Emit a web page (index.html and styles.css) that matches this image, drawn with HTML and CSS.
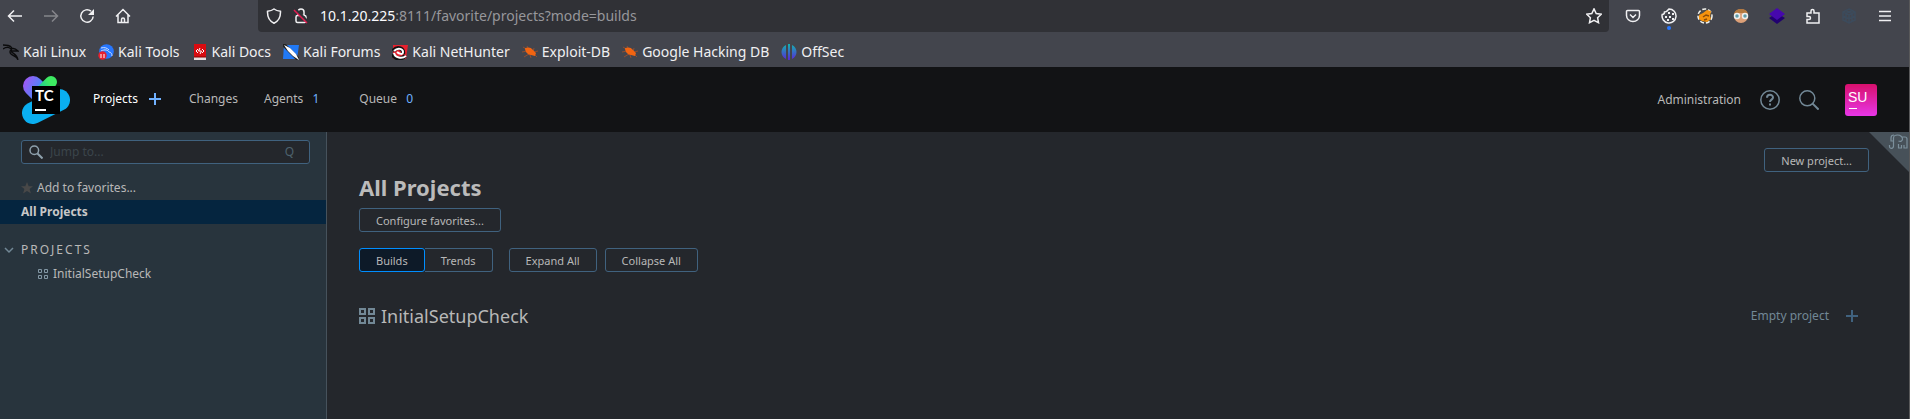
FILE: index.html
```html
<!DOCTYPE html>
<html lang="en">
<head>
<meta charset="utf-8">
<title>All Projects — TeamCity</title>
<link rel="stylesheet" href="styles.css">
</head>
<body>
<svg class="defs" aria-hidden="true">
  <defs>
    <linearGradient id="violet" x1="2" y1="4" x2="26" y2="16" gradientUnits="userSpaceOnUse"><stop offset="0" stop-color="#a257f5"/><stop offset="0.8" stop-color="#3b8df8"/></linearGradient>
    <linearGradient id="green" x1="32" y1="4" x2="18" y2="14" gradientUnits="userSpaceOnUse"><stop offset="0.3" stop-color="#3dea62"/><stop offset="1" stop-color="#18c5a0"/></linearGradient>
    <linearGradient id="offsec" x1="0" y1="0" x2="0" y2="1"><stop offset="0" stop-color="#12b5b0"/><stop offset="1" stop-color="#5a25d8"/></linearGradient>
    <symbol id="bug" viewBox="0 0 16 16">
      <path d="M1 3l5 3M5 2l2 4M0 8l5-1M2 13l5-3M9 14l-1-3M12 4l-1 4M12 8l4-1M12 10l3 3" stroke="#a5512a" stroke-width=".8" fill="none"/>
      <path d="M3 4c3-1 6-1 8 2l3 3-1 3-4-1C6 11 3 8 3 4z" fill="#f26411"/>
    </symbol>
  </defs>
</svg>
<div class="browser">
  <div class="toolbar">
    <nav class="history" aria-label="Browser">
      <button class="tool" aria-label="Back"><svg viewBox="0 0 16 16"><path d="M15 8H2M7 2.500L1.500 8L7 13.500"/></svg></button>
      <button class="tool dim" aria-label="Forward"><svg viewBox="0 0 16 16"><path d="M1 8H14M9 2.500L14.500 8L9 13.500"/></svg></button>
      <button class="tool" aria-label="Reload"><svg viewBox="0 0 16 16"><path d="M14.200 8.500A6.200 6.200 0 1 1 12 3.200"/><path d="M15 1v6H9z" fill="currentColor" stroke="none"/></svg></button>
      <button class="tool" aria-label="Home"><svg viewBox="0 0 16 16"><path d="M1 8.500L8 1.500l7 7M3 7v7.500h10V7M6.500 14.500v-3a1.500 1.500 0 0 1 3 0v3"/></svg></button>
    </nav>
    <div class="address">
      <svg class="icon" viewBox="0 0 16 16"><path d="M8 1c2 1.500 4 2 6.500 2.300C14.700 9 13 13 8 15.200 3 13 1.300 9 1.500 3.300 4 3 6 2.500 8 1z"/></svg>
      <svg class="icon" viewBox="0 0 16 16"><rect x="3" y="7.500" width="10" height="7" rx="1.500"/><path d="M5 7V4a3 3 0 0 1 6 0v3"/><path d="M2 1l13 13" stroke="#303136" stroke-width="3"/><path d="M1 2l13 13" stroke="#e21b50"/></svg>
      <a class="url" href="#"><b>10.1.20.225</b>:8111/favorite/projects?mode=builds</a>
      <button class="tool star" aria-label="Bookmark this page"><svg viewBox="0 0 16 16"><path d="M8 .9l2.200 4.600 5 .7-3.600 3.500.9 5L8 12.300l-4.500 2.400.9-5L.8 6.200l5-.7z"/></svg></button>
    </div>
    <div class="extensions">
      <button class="tool" aria-label="Pocket"><svg viewBox="0 0 16 16"><path d="M2.500 2.500h11a1 1 0 0 1 1 1V7.500a6.500 6 0 0 1-13 0V3.500a1 1 0 0 1 1-1zM5 6.500l3 3 3-3"/></svg></button>
      <button class="tool marked" aria-label="Cookies"><svg viewBox="0 0 16 16"><path d="M8 1a7 7 0 1 1-6.800 5.500c1.800 0 2.300-.8 2.300-2.500C5.500 4 6.500 3 8 1z"/><path d="M7 4h2v2H7zM11 5h2v2h-2zM4 8h2v2H4zM8 8h2v2H8zM6 11h2v2H6zM11 10h2v2h-2z" fill="currentColor" stroke="none"/></svg></button>
      <button class="tool" aria-label="FoxyProxy"><svg viewBox="0 0 16 16"><circle cx="8" cy="8" r="7" fill="#4b4b4b" stroke="#f3f3ee" stroke-width="1.500" stroke-dasharray="4 2"/><path d="M2 7l4-2 4-3 4 1-1 5 1 3-4 3-5-1-3-2z" fill="#f6930d" stroke="none"/><path d="M6 9l3-2 3 1M7 12l3-1" stroke="#8a4b08"/></svg></button>
      <button class="tool" aria-label="User agent"><svg viewBox="0 0 16 16"><circle cx="8" cy="8" r="7" fill="#dda078" stroke="none"/><path d="M1 7C1 3 4 1 8 1s7 2 7 6l-3-2H4z" fill="#b4793f" stroke="none"/><circle cx="4" cy="8" r="2.500" fill="#5e9ca8" stroke="#eee"/><circle cx="12" cy="8" r="2.500" fill="#5e9ca8" stroke="#eee"/></svg></button>
      <button class="tool" aria-label="Wappalyzer"><svg viewBox="0 0 16 16"><path d="M0 10l8-5 8 5-8 6z" fill="#210070" stroke="none"/><path d="M0 6l8-6 8 6-8 6z" fill="#4608ad" stroke="none"/></svg></button>
      <button class="tool" aria-label="Extensions"><svg viewBox="0 0 16 16"><path d="M2 5h4V3a1.500 1.500 0 0 1 3 0v2h5v10H2v-3.500h2a1.500 1.500 0 0 0 0-3H2z"/></svg></button>
      <button class="tool faint" aria-label="Sandbox"><svg viewBox="0 0 16 16"><path d="M8 1l6 3v8l-6 3-6-3V4zM2 4l6 3 6-3M8 7v8M2 8l6 3 6-3M5 2.500l6 3v8M11 2.500l-6 3v8"/></svg></button>
      <button class="tool" aria-label="Menu"><svg viewBox="0 0 16 16"><path d="M2 3.500h12M2 8h12M2 12.500h12"/></svg></button>
    </div>
  </div>
  <nav class="bookmarks" aria-label="Bookmarks">
    <a href="#"><svg viewBox="0 0 16 16"><path d="M0 1c4 0 7 0 9 3M0 5c3-2 6-2 8 0 2-1 5 0 7 2-3 0-5 0-6 0-2 2 5 2 6 9-1-5-8-4-8-8 0-1 1-2 2-2" fill="none" stroke="#0b0b0c" stroke-width="1.300"/></svg>Kali Linux</a>
    <a href="#"><svg viewBox="0 0 16 16"><circle cx="8.500" cy="7.500" r="7.300" fill="#2777ff"/><path d="M3 4c4-1 6 0 8 2M3 7c4-2 7-1 8 1 2 0 3 2 3 4" fill="none" stroke="#cfe0ff"/><circle cx="4.500" cy="11.500" r="4.200" fill="#e6212f"/><path d="M3 10v4M6 10v4" stroke="#fff"/></svg>Kali Tools</a>
    <a href="#"><svg viewBox="0 0 16 16"><path d="M2 0h12v13H2z" fill="#d80b10"/><path d="M2 13h12v3H2z" fill="#e8dede"/><path d="M2 13h12" stroke="#800"/><path d="M6 5L4 7l2 2M10 5l2 2-2 2M8 4L6.500 7h3L8 10" fill="none" stroke="#fff"/></svg>Kali Docs</a>
    <a href="#"><svg viewBox="0 0 16 16"><path d="M1 1h15l-2 14H0z" fill="#2179f5"/><path d="M0 0l15 15" stroke="#222" stroke-width="4"/><path d="M1 1l6 3 6 6 3 6-6-4-5-5z" fill="#fff"/></svg>Kali Forums</a>
    <a href="#"><svg viewBox="0 0 16 16"><path d="M1 1h15l-2 14H1z" fill="#e6212f"/><path d="M1 7c5-6 11-2 10 3M1 10c1 5 8 6 12 2" fill="none" stroke="#111" stroke-width="4"/><path d="M2 7c4-4 9-2 9 1s-4 2-6 0M2 9c1 5 8 6 12 3" fill="none" stroke="#fff" stroke-width="2"/></svg>Kali NetHunter</a>
    <a href="#"><svg><use href="#bug"/></svg>Exploit-DB</a>
    <a href="#"><svg><use href="#bug"/></svg>Google Hacking DB</a>
    <a href="#"><svg viewBox="0 0 16 16"><path d="M5 1v14C-1 12-1 4 5 1zM7 0h2v16H7zM11 1c6 3 6 11 0 14z" fill="url(#offsec)"/></svg>OffSec</a>
  </nav>
</div>
<header class="header">
  <a class="logo" href="#" aria-label="TeamCity">
    <svg viewBox="0 0 48 48" fill="none" stroke-linecap="round"><path d="M11 10l9 9" stroke="url(#violet)" stroke-width="20"/><path d="M29 6L17 18" stroke="url(#green)" stroke-width="12"/><path d="M37 24L11 37" stroke="#0aaff1" stroke-width="22"/><path d="M10 10h28v28H10z" fill="#000"/><path d="M13 33h11v2H13z" fill="#fff"/></svg>
    <span class="logo-text">TC</span>
  </a>
  <nav class="main-nav" aria-label="Main">
    <a class="current" href="#">Projects</a>
    <button class="create" aria-label="Create project"><svg viewBox="0 0 12 12"><path d="M6 0v12M0 6h12"/></svg></button>
    <a href="#">Changes</a>
    <a href="#">Agents <span class="count">1</span></a>
    <a class="queue" href="#">Queue <span class="count">0</span></a>
  </nav>
  <div class="account">
    <a href="#">Administration</a>
    <button class="round" aria-label="Help"><svg viewBox="0 0 20 20"><circle cx="10" cy="10" r="9.200"/><path d="M7 7.800C7 3.800 13 4 13 7.500c0 2-3 2.300-3 4.500M10 13.500v2" stroke-width="2"/></svg></button>
    <button class="round" aria-label="Search"><svg viewBox="0 0 20 20"><circle cx="8.300" cy="8.300" r="7.500"/><path d="M13.600 13.600l6 6" stroke-width="2"/></svg></button>
    <button class="avatar" aria-label="Profile">SU</button>
  </div>
</header>
<div class="content">
  <aside class="sidebar">
    <div class="search">
      <svg viewBox="0 0 14 14"><circle cx="5.300" cy="5.300" r="4.300"/><path d="M8.500 8.500l5 5" stroke-width="2"/></svg>
      <input type="text" placeholder="Jump to..." aria-label="Jump to">
      <kbd>Q</kbd>
    </div>
    <nav class="tree" aria-label="Projects">
      <a class="favorites" href="#"><svg viewBox="0 0 12 12"><path d="M6 0l1.700 4.200H12L8.600 7l1.300 4.500L6 9 2.100 11.500 3.400 7 0 4.200h4.300z"/></svg>Add to favorites...</a>
      <a class="selected" href="#">All Projects</a>
      <button class="group"><svg viewBox="0 0 10 10"><path d="M1 3l4 4 4-4"/></svg>PROJECTS</button>
      <a class="project" href="#"><svg viewBox="0 0 10 10"><path d="M.5.5h3v3h-3zM6.500.5h3v3h-3zM.5 6.500h3v3h-3zM6.500 6.500h3v3h-3z"/></svg>InitialSetupCheck</a>
    </nav>
  </aside>
  <main class="main">
    <div class="title-row">
      <h1>All Projects</h1>
      <button class="button">New project...</button>
    </div>
    <div class="actions"><button class="button">Configure favorites...</button></div>
    <div class="actions">
      <div class="switch"><button class="button active">Builds</button><button class="button">Trends</button></div>
      <button class="button">Expand All</button>
      <button class="button">Collapse All</button>
    </div>
    <section class="project-row">
      <h2><svg viewBox="0 0 16 16"><path d="M1 1h5v5H1zM10 1h5v5h-5zM1 10h5v5H1zM10 10h5v5h-5z"/></svg>InitialSetupCheck</h2>
      <span class="empty">Empty project</span>
      <button class="create" aria-label="Create build configuration"><svg viewBox="0 0 12 12"><path d="M6 0v12M0 6h12"/></svg></button>
    </section>
    <a class="corner" href="#" aria-label="Experimental features"><svg viewBox="0 0 40 40"><path d="M0 0h40v40z" fill="#475159"/><path d="M20.500 13v1.500c0 2.500 4 2.500 4-.5V6c0-2 2-3 4-3 3 0 5 2 5 4s-2 3-4 2M24 9h-2V6c0-2 1-3 3-3M33 5h3c1 0 2 1 2 2v9h-3v-3M29.500 12v4h3v-3" fill="none" stroke="#7c909c" stroke-width="1.200"/></svg></a>
  </main>
</div>
</body>
</html>
```
FILE: styles.css
```css
* { box-sizing: border-box; }

body {
  display: flex;
  flex-direction: column;
  min-height: 100vh;
  margin: 0;
  border-right: 1px solid #59595a;
  background: #24272c;
  color: #b8b8b8;
  font: 12px/24px "Noto Sans", sans-serif;
}

a { color: inherit; text-decoration: none; }
svg { flex: none; }
button { padding: 0; border: 0; background: none; color: inherit; font: inherit; }
.defs { position: absolute; width: 0; height: 0; }

.browser { background: #43454d; color: #f0f0f2; font-size: 14px; }
.toolbar { display: flex; height: 32px; padding-left: 6px; }
.history { display: flex; gap: 18px; width: 252px; }
.tool { display: flex; align-items: center; justify-content: center; width: 18px; height: 32px; }
.tool svg, .icon { width: 16px; height: 16px; fill: none; stroke: currentColor; stroke-width: 1.500; }
.dim { color: #85868b; }
.faint { color: #3c4b5c; }
.address { display: flex; flex: 1; align-items: center; gap: 11px; padding: 0 6px 0 8px; border-radius: 0 0 4px 4px; background: #303136; }
.url { flex: 1; color: #97979b; font-size: 14px; }
.url b { color: #fbfbfe; font-weight: 400; }
.extensions { display: flex; gap: 18px; padding: 0 15px; }
.marked { position: relative; }
.marked::after { content: ""; position: absolute; left: 7px; bottom: 2px; width: 4px; height: 4px; border-radius: 50%; background: #2878ff; }

.bookmarks { display: flex; gap: 12px; height: 35px; padding: 8px 3px 0; }
.bookmarks a { display: flex; align-items: center; gap: 4px; height: 24px; }
.bookmarks svg { width: 16px; height: 16px; }

.header { display: flex; align-items: center; height: 65px; padding: 0 32px 0 22px; background: #121315; }
.logo { position: relative; width: 48px; height: 48px; }
.logo svg { display: block; width: 48px; height: 48px; }
.logo-text { position: absolute; left: 13px; top: 11px; color: #fff; font: 700 15px/16px Lato, sans-serif; }
.main-nav { display: flex; align-items: center; margin-left: 23px; padding-bottom: 1px; }
.main-nav a { margin-right: 26px; }
.main-nav .current { margin-right: 11px; color: #fff; }
.main-nav .create { margin-right: 28px; color: #70b1ff; }
.main-nav .queue { margin-left: 14px; }
.count { margin-left: 6px; color: #70b1ff; }
.create { display: flex; }
.create svg { width: 12px; height: 12px; stroke: currentColor; stroke-width: 2; }
.account { display: flex; align-items: center; margin-left: auto; }
.round { display: flex; margin-left: 19px; color: #728896; }
.round svg { width: 20px; height: 20px; fill: none; stroke: currentColor; stroke-width: 1.500; }
.avatar { width: 32px; height: 32px; margin-left: 26px; padding: 0 0 6px 3px; border-radius: 3px; background: linear-gradient(#fff, #fff) 4px 24px / 8px 1px no-repeat, linear-gradient(#d7106c, #e836e8); color: #fff; font: 14px/16px "Liberation Sans", sans-serif; text-align: left; }

.content { display: flex; flex: 1; }
.sidebar { width: 327px; padding-top: 8px; border-right: 1px solid #46525c; background: #28343d; }
.search { display: flex; align-items: center; height: 24px; margin: 0 16px 0 21px; padding: 0 15px 0 7px; border: 1px solid #40627f; border-radius: 3px; background: #24272c; }
.search svg { width: 14px; height: 14px; fill: none; stroke: #8fa1ad; stroke-width: 1.500; }
.search input { flex: 1; min-width: 0; padding: 0 7px; border: 0; outline: 0; background: none; color: #b8b8b8; font: inherit; }
.search input::placeholder { color: #3b454b; opacity: 1; }
.search kbd { color: #4e626e; font: inherit; }
.tree { display: flex; flex-direction: column; padding-top: 12px; }
.tree a, .group { display: flex; align-items: center; height: 24px; padding-left: 21px; }
.favorites svg { width: 12px; height: 12px; margin-right: 4px; fill: #484848; }
.tree .selected { background: #05253f; color: #c8c8c8; font-weight: 700; }
.group { margin-top: 14px; letter-spacing: 2px; }
.tree .group { padding-left: 4px; }
.group svg { width: 10px; height: 10px; margin-right: 7px; fill: none; stroke: #728896; stroke-width: 1.500; }
.tree .project { padding-left: 38px; }
.project svg { width: 10px; height: 10px; margin-right: 5px; fill: none; stroke: #8297a4; }

.main { position: relative; flex: 1; padding: 16px 40px 0 32px; }
.title-row { display: flex; align-items: flex-start; justify-content: space-between; height: 60px; }
h1 { margin: 22px 0 0; font-size: 22px; line-height: 34px; color: #bbb; }
h2 { display: flex; align-items: center; gap: 6px; margin: 0; font-size: 18px; font-weight: 400; line-height: 24px; }
h2 svg { width: 16px; height: 16px; fill: none; stroke: #728896; stroke-width: 2; }
.button { height: 24px; padding: 1px 16px 0; border: 1px solid #40627f; border-radius: 3px; font-size: 11px; line-height: 20px; }
.actions { display: flex; gap: 8px; margin-bottom: 16px; }
.switch { display: flex; margin-right: 8px; }
.switch .button { border-left: 0; border-radius: 0 3px 3px 0; }
.switch .active { border: 1px solid #008eff; border-radius: 3px; background: #0d1a28; }
.project-row { display: flex; align-items: center; margin-top: 32px; padding-right: 11px; }
.empty { margin-left: auto; color: #728896; }
.project-row .create { margin-left: 17px; color: #40627f; }
.corner { position: absolute; top: 0; right: 0; width: 40px; height: 40px; }
.corner svg { display: block; }
```
